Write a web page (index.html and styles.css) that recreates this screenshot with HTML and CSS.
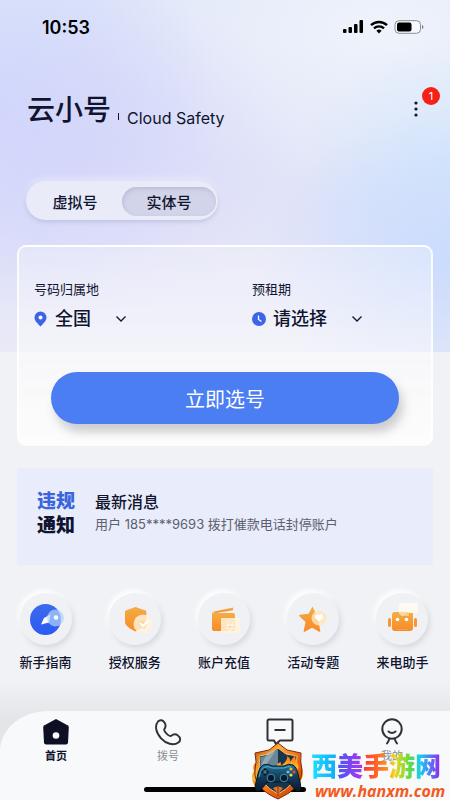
FILE: index.html
```html
<!DOCTYPE html>
<html lang="zh-CN">
<head>
    <meta charset="UTF-8">
    <meta name="viewport" content="width=device-width, initial-scale=1.0">
    <title>云小号</title>
    <link rel="stylesheet" href="styles.css">
</head>
<body>

    <div class="status-bar">
        <span class="time">10:53</span>
        <div class="status-icons">
            <svg width="22" height="14" viewBox="0 0 22 14">
                <rect x="1" y="9" width="3.500" height="4" rx="1"/>
                <rect x="6.500" y="7" width="3.500" height="6" rx="1"/>
                <rect x="12" y="4" width="3.500" height="9" rx="1"/>
                <rect x="17.500" y="0" width="3.500" height="13" rx="1"/>
            </svg>
            <svg width="18" height="14" viewBox="0 0 18 14" fill="none" stroke="#000" stroke-width="2.4">
                <path d="M1 5.200a11.600 11.600 0 0 1 16 0"/>
                <path d="M4 8.400a7.200 7.200 0 0 1 10 0"/>
                <path d="M9 13.400l-2.600-2.700a3.800 3.800 0 0 1 5.200 0z" fill="#000" stroke="none"/>
            </svg>
            <svg width="30" height="14" viewBox="0 0 30 14">
                <rect x="1" y=".7" width="25.500" height="12.600" rx="4" fill="#fff" fill-opacity=".5" stroke="#8b8d96"/>
                <rect x="3" y="2.500" width="14.500" height="9" rx="2"/>
                <path d="M28 5v4q1.400-.6 1.400-2T28 5z" fill="#777"/>
            </svg>
        </div>
    </div>

    <header class="header">
        <h1>云小号</h1>
        <span class="divider"></span>
        <span class="subtitle">Cloud Safety</span>
        <button class="more-btn" aria-label="更多">
            <svg width="6" height="18" viewBox="0 0 6 18" fill="#10142e">
                <circle cx="3" cy="3" r="1.600"/>
                <circle cx="3" cy="9" r="1.600"/>
                <circle cx="3" cy="15" r="1.600"/>
            </svg>
            <span class="badge">1</span>
        </button>
    </header>

    <div class="switch">
        <button class="switch-btn">虚拟号</button>
        <button class="switch-btn active">实体号</button>
    </div>

    <form class="card">
        <div class="fields">
            <div class="field">
                <label for="region">号码归属地</label>
                <div class="field-row">
                    <svg width="14" height="16" viewBox="0 0 14 16">
                        <path d="M6.500 .5a6 6 0 0 1 6 6c0 3.600-3.500 6.200-6 9-2.500-2.800-6-5.400-6-9a6 6 0 0 1 6-6z" fill="#3b64e6"/>
                        <circle cx="6.500" cy="6.500" r="2" fill="#fff"/>
                    </svg>
                    <div class="select-box">
                        <select id="region">
                            <option>全国</option>
                        </select>
                        <svg class="arrow" width="12" height="8" viewBox="0 0 12 8" fill="none" stroke="#10142e" stroke-width="1.300"><path d="M1.500 1.500L6 6l4.500-4.500"/></svg>
                    </div>
                </div>
            </div>
            <div class="field">
                <label for="period">预租期</label>
                <div class="field-row">
                    <svg width="14" height="16" viewBox="0 0 14 16">
                        <circle cx="7" cy="8" r="7" fill="#3b64e6"/>
                        <path d="M6.500 4.500v4l3 2" fill="none" stroke="#fff" stroke-width="1.300"/>
                    </svg>
                    <div class="select-box">
                        <select id="period">
                            <option>请选择</option>
                        </select>
                        <svg class="arrow" width="12" height="8" viewBox="0 0 12 8" fill="none" stroke="#10142e" stroke-width="1.300"><path d="M1.500 1.500L6 6l4.500-4.500"/></svg>
                    </div>
                </div>
            </div>
        </div>
        <button type="button" class="submit-btn">立即选号</button>
    </form>

    <section class="notice">
        <div class="notice-logo"><span class="blue">违规</span><span>通知</span></div>
        <div class="notice-text">
            <h2>最新消息</h2>
            <p>用户 185****9693 拨打催款电话封停账户</p>
        </div>
    </section>

    <!-- Shortcuts -->
    <div class="shortcuts">
        <a href="#guide">
            <span class="circle">
                <svg width="36" height="36" viewBox="0 0 36 36">
                    <defs>
                        <linearGradient id="orange" x1="0" y1="0" x2="0" y2="1"><stop offset="0" stop-color="#f3ad45"/><stop offset="1" stop-color="#f98a27"/></linearGradient>
                        <linearGradient id="blue" x1="0" y1="0" x2="0" y2="1"><stop offset="0" stop-color="#3c6bed"/><stop offset="1" stop-color="#2a5af3"/></linearGradient>
                    </defs>
                    <circle cx="17.500" cy="18.500" r="15.500" fill="url(#blue)"/>
                    <path d="M13 23.500l3-6.500 6.500-3.500-1.500 8z" fill="#fff"/>
                    <circle cx="27.500" cy="17" r="8.500" fill="#b4d4fb" fill-opacity=".7"/>
                    <circle cx="28" cy="16.500" r="2.300" fill="#fff"/>
                </svg>
            </span>
            新手指南
        </a>
        <a href="#service">
            <span class="circle">
                <svg width="36" height="36" viewBox="0 0 36 36">
                    <path d="M18.500 6l10 3.500c.5.200.8.600.8 1.100V21c0 4-6 7-10.800 9.500C13.700 28 8 25 8 21V10.600c0-.5.300-.9.800-1.100z" fill="url(#orange)"/>
                    <circle cx="26" cy="23" r="9.500" fill="#fff3dd" fill-opacity=".82"/>
                    <path d="M21 23l4-4 5 5-3 4z" fill="#f8c98a" fill-opacity=".5"/>
                    <path d="M23 22l3 3 5-5" fill="none" stroke="#fff" stroke-width="2"/>
                </svg>
            </span>
            授权服务
        </a>
        <a href="#recharge">
            <span class="circle">
                <svg width="36" height="36" viewBox="0 0 36 36">
                    <path d="M6 11L27 6.500v2.700L10 12z" fill="url(#orange)"/>
                    <path d="M6 12h21q2 0 2 2v14q0 2-2 2H8q-2 0-2-2z" fill="url(#orange)"/>
                    <rect x="15" y="17" width="19" height="15" rx="1" fill="#fff3dc" fill-opacity=".85"/>
                    <path d="M21 20l3 4 3-4M20.500 24.500h7M20.500 27h7M24 24v6" fill="none" stroke="#fff" stroke-width="1.700"/>
                    <path d="M21 19.500l3 4 3-4M21 26h6M24 24v5" fill="none" stroke="#f6c77c" stroke-width=".7"/>
                </svg>
            </span>
            账户充值
        </a>
        <a href="#events">
            <span class="circle">
                <svg width="36" height="36" viewBox="0 0 36 36">
                    <path d="M17.500 5.500l3.700 8 8.800 1-6.500 6 1.800 9.500q.1 1.200-1 .7l-7.300-4-7.300 4q-1.200.4-1-.8L10.500 21 4.200 15q-.6-1 .6-1.200l8.700-1z" fill="url(#orange)"/>
                    <circle cx="24" cy="17" r="7.500" fill="#ffe6bc" fill-opacity=".8"/>
                    <path d="M24 20.500l-4-3.800q-1-3 1.800-3.200h4.400q2.800.2 1.800 3.200z" fill="#fff"/>
                </svg>
            </span>
            活动专题
        </a>
        <a href="#assistant">
            <span class="circle">
                <svg width="36" height="36" viewBox="0 0 36 36">
                    <rect x="8" y="11" width="21" height="19" rx="3" fill="url(#orange)"/>
                    <rect x="4" y="17" width="3" height="9" rx="1.500" fill="#f99435"/>
                    <rect x="30" y="17" width="3" height="9" rx="1.500" fill="#f99435"/>
                    <circle cx="13.500" cy="18.500" r="1.800" fill="#fff"/>
                    <circle cx="22.500" cy="18.500" r="1.800" fill="#fff"/>
                    <path d="M13 28.500h11" stroke="#f0a252" stroke-width="1"/>
                    <path d="M15 2h19v10H22l-4 3-3-3z" fill="#fffaf0" fill-opacity=".88"/>
                    <path d="M15 11h10v4h-7z" fill="#fcd597" fill-opacity=".8"/>
                </svg>
            </span>
            来电助手
        </a>
    </div>

    <nav class="tab-bar">
        <div class="tabs">
            <a href="#home" class="tab active">
                <svg width="28" height="28" viewBox="0 0 28 28"><path d="M14 1l11.500 6.200q1.300.8 1.300 2.300L26 24.500q-.2 2-2 2H4q-1.800 0-2-2L1.200 9.500q0-1.500 1.300-2.300z" fill="#0d1024"/><circle cx="14" cy="17.500" r="3.300" fill="#f8f9fb"/></svg>
                首页
            </a>
            <a href="#dial" class="tab">
                <svg width="28" height="28" viewBox="0 0 28 28" fill="none" stroke="#303138" stroke-width="1.900" stroke-linejoin="round"><path d="M4 3.500C6 1.300 9 2 10.800 5c1.700 2.900.7 4.500-.5 6.300-1 1.600 4.800 7.600 6.600 6.600 2.100-1.500 4.200-2.500 6.700-.7 3.200 2.300 3.300 5.500.8 7.300-5 3.500-12.400 1.300-17.300-4.200C1.500 14.500.7 7.300 4 3.500z"/></svg>
                拨号
            </a>
            <a href="#message" class="tab">
                <svg width="28" height="28" viewBox="0 0 28 28" fill="none" stroke="#303138" stroke-width="2" stroke-linejoin="round"><path d="M3 1.500h22q1.500 0 1.500 1.500v18q0 1.500-1.500 1.500H14l-4 3.500-2-3.500H3Q1.500 22.500 1.500 21V3Q1.500 1.500 3 1.500z"/><path d="M8.500 12h11"/></svg>
                消息
            </a>
            <a href="#mine" class="tab">
                <svg width="28" height="28" viewBox="0 0 28 28" fill="none" stroke="#303138" stroke-width="2" stroke-linecap="round"><circle cx="14" cy="11" r="9.700"/><path d="M10.500 13.500q3.500 3 7 0"/><path d="M11.500 20.500q-1 3-2.500 5M16.500 20.500q1 3 2.500 5"/></svg>
                我的
            </a>
        </div>
        <div class="home-line"></div>

        <div class="site-mark">
            <svg width="54" height="58" viewBox="0 0 54 58">
                <defs>
                    <linearGradient id="rim" x1="0" y1="0" x2="1" y2="1"><stop offset="0" stop-color="#b83c08"/><stop offset=".3" stop-color="#ffae35"/><stop offset=".6" stop-color="#ec640e"/><stop offset="1" stop-color="#c73f08"/></linearGradient>
                    <linearGradient id="fire" x1="0" y1="0" x2="0" y2="1"><stop offset="0" stop-color="#ff6a0c"/><stop offset=".6" stop-color="#ffb52d"/><stop offset="1" stop-color="#f15b08"/></linearGradient>
                    <linearGradient id="pad" x1="0" y1="0" x2="0" y2="1"><stop offset="0" stop-color="#28739a"/><stop offset=".5" stop-color="#123a58"/><stop offset="1" stop-color="#09192d"/></linearGradient>
                </defs>
                <path d="M4 21q-3 3-1 8-4 5 0 14l3 6 8-4-6-20zM50 18q0 4-1 5 6 8 1 15l-4 9-8-5 5-17z" fill="url(#fire)"/>
                <path d="M27 1l9 7 14 3q-1 9 1 17 1 18-24 29Q2 46 4 28q2-8 0-17l14-3z" fill="url(#rim)" stroke="#7c2a0b"/>
                <path d="M27 6l8 6 11 2q-1 6 0 14 0 14-19 24Q8 42 8 28q1-8 0-14l11-2z" fill="#17364d" stroke="#ffc063"/>
                <path d="M27 7L19 13 9 15q1 7 0 14l18-1z" fill="#6a8797"/>
                <path d="M17 10l8-2-13 20-3-3z" fill="#b0c0c4" fill-opacity=".6"/>
                <path d="M25 26q1-5 5-6-1 3 1 3 6-5 5-9 4 2 3 6l5-7q0 5 3 9 2 5-2 10H24z" fill="url(#fire)"/>
                <path d="M31 27l4-3 1 2 5-5 1 7z" fill="#ffdf55"/>
                <path d="M12 23q5-2 9 1h12q5-3 9-1 4 2 6 13 4 13-1 13-3 0-9-9H16q-6 9-9 9-5 0-1-13 2-11 6-13z" fill="url(#pad)" stroke="#081624"/>
                <path d="M8 35q2-9 6-10 4-1 7 1h12q4-2 7-1" fill="none" stroke="#4ab3d8"/>
                <path d="M14 26.500v7M10.500 30h7" stroke="#071320" stroke-width="2.500"/>
                <path d="M14 28v4M12 30h4" stroke="#82aabd" stroke-width=".8"/>
                <circle cx="20" cy="36" r="3.800" fill="#0a1929" stroke="#438eac"/>
                <circle cx="33" cy="36" r="3.800" fill="#0a1929" stroke="#438eac"/>
                <circle cx="40" cy="27" r="1.600" fill="#ffb52b"/>
                <circle cx="37" cy="30" r="1.600" fill="#49cbf2"/>
                <circle cx="43" cy="30" r="1.600" fill="#f44b27"/>
                <circle cx="40" cy="33" r="1.600" fill="#f4df48"/>
                <path d="M22 46q5-3 10 0l-5 6z" fill="#e4702a"/>
                <path d="M27 44v10" stroke="#7d381c"/>
            </svg>
            <div class="site-text">
                <strong>西美手游网</strong>
                <em>www.hanxm.com</em>
            </div>
        </div>
    </nav>

</body>
</html>
```
FILE: styles.css
```css
* {
    box-sizing: border-box;
}

body {
    margin: 0;
    min-height: 100vh;
    display: flex;
    flex-direction: column;
    font-family: Inter, "Noto Sans CJK SC", sans-serif;
    color: #10142e;
    /* hero glow on top, plain grey below */
    background:
        radial-gradient(ellipse 190px 150px at 100% 260px, rgba(196, 217, 254, 0.8), transparent) no-repeat 0 0 / 100% 352px,
        radial-gradient(ellipse 150px 120px at 100% 160px, rgba(208, 231, 253, 0.7), transparent) no-repeat 0 0 / 100% 352px,
        radial-gradient(ellipse 230px 170px at 70px 150px, rgba(212, 211, 250, 0.7), transparent) no-repeat 0 0 / 100% 352px,
        radial-gradient(ellipse 220px 200px at 0 110px, rgba(202, 214, 252, 0.8), transparent) no-repeat 0 0 / 100% 352px,
        radial-gradient(ellipse 300px 160px at 85% 30px, #eff3fb, transparent) no-repeat 0 0 / 100% 352px,
        linear-gradient(#e0e6f9, #e2e4f8 60%, #e9e9f7) no-repeat 0 0 / 100% 352px,
        linear-gradient(#f1f2f5 0, #f1f2f5 680px, #e4e5e9 720px);
}

button,
select {
    font-family: inherit;
    color: inherit;
    border: none;
    padding: 0;
    cursor: pointer;
}

a {
    color: inherit;
    text-decoration: none;
}

.status-bar {
    display: flex;
    justify-content: space-between;
    align-items: center;
    height: 54px;
    padding: 0 26px 0 42px;
}

.time {
    font-size: 18px;
    font-weight: 600;
    color: #000;
}

.status-icons {
    display: flex;
    gap: 6px;
}

.header {
    display: flex;
    align-items: flex-end;
    padding: 0 31px 51px 27px;
    height: 127px;
}

.header h1 {
    margin: 0;
    font-size: 28px;
    line-height: 40px;
    font-weight: 500;
}

.divider {
    width: 1px;
    height: 7px;
    margin: 0 8px 10px 7px;
    background: #10142e;
}

.subtitle {
    font-size: 16px;
    line-height: 24px;
}

.more-btn {
    position: relative;
    display: flex;
    margin-left: auto;
    margin-bottom: 12px;
    background: none;
}

.badge {
    position: absolute;
    left: 9px;
    top: -13px;
    width: 18px;
    height: 18px;
    border-radius: 50%;
    background: #f62017;
    color: #fff;
    font-size: 11px;
    line-height: 18px;
}

.switch {
    align-self: flex-start;
    display: flex;
    margin-left: 26px;
    padding: 6px 2px 4px;
    border-radius: 20px;
    background: #e9ebf9;
    box-shadow: 0 2px 4px rgba(140, 145, 185, 0.35), 0 -3px 6px rgba(240, 240, 255, 0.6);
}

.switch-btn {
    width: 94px;
    height: 29px;
    border-radius: 15px;
    background: none;
    font-size: 15px;
    font-weight: 500;
}

.switch-btn.active {
    background: #d2d5e9;
    box-shadow: inset 1px 2px 4px rgba(150, 154, 190, 0.4);
}

.card {
    margin: 25px 17px 0;
    padding: 32px 32px 20px;
    border: 2px solid rgba(255, 255, 255, 0.8);
    border-radius: 9px;
    background: linear-gradient(rgba(250, 250, 253, 0.3), rgba(252, 252, 253, 0.5) 50%, rgba(253, 253, 253, 0.9));
}

.fields {
    display: grid;
    grid-template-columns: 1fr 164px;
    margin: 0 -17px;
}

.field label {
    display: block;
    font-size: 13px;
    line-height: 20px;
}

.field-row {
    display: flex;
    align-items: center;
    gap: 7px;
    margin-top: 6px;
}

.select-box {
    display: grid;
    align-items: center;
}

.select-box select {
    grid-area: 1 / 1;
    appearance: none;
    padding-right: 36px;
    background: none;
    font-size: 18px;
    font-weight: 500;
    line-height: 28px;
}

.arrow {
    grid-area: 1 / 1;
    justify-self: end;
    pointer-events: none;
}

.submit-btn {
    width: 100%;
    height: 52px;
    margin-top: 39px;
    border-radius: 26px;
    background: #4b7df3;
    box-shadow: 4px 8px 10px rgba(120, 120, 125, 0.35);
    color: #fff;
    font-size: 20px;
}

.notice {
    display: flex;
    gap: 20px;
    margin: 22px 17px 0;
    padding: 22px 20px;
    height: 97px;
    background: #e9ecfa;
}

.notice-logo {
    display: flex;
    flex-direction: column;
    font-size: 19px;
    font-weight: 900;
    line-height: 24px;
}

.notice-logo .blue {
    color: #3b64e0;
}

.notice-text h2 {
    margin: 0;
    font-size: 16px;
    font-weight: 500;
    line-height: 24px;
}

.notice-text p {
    margin: 0;
    font-size: 13px;
    line-height: 20px;
    color: #5c5f70;
}

.shortcuts {
    display: grid;
    grid-template-columns: repeat(5, 1fr);
    margin: 28px 3px 20px 1px;
}

.shortcuts a {
    display: flex;
    flex-direction: column;
    align-items: center;
    gap: 7px;
    font-size: 13px;
    font-weight: 500;
    line-height: 20px;
}

.circle {
    display: flex;
    justify-content: center;
    align-items: center;
    width: 52px;
    height: 52px;
    border-radius: 50%;
    background: #f0f1f4;
    box-shadow: 2px 3px 5px rgba(180, 183, 195, 0.4), -2px -3px 5px #fff;
}

.tab-bar {
    position: relative;
    margin-top: auto;
    padding: 7px 0 8px;
    border-top-left-radius: 48px 40px;
    background: #f8f9fb;
}

.tabs {
    display: grid;
    grid-template-columns: repeat(4, 1fr);
    margin-right: 2px;
}

.tab {
    display: flex;
    flex-direction: column;
    align-items: center;
    gap: 2px;
    font-size: 11px;
    line-height: 16px;
    color: #8c8d94;
}

.tab.active {
    color: #10142e;
    font-weight: 700;
}

.home-line {
    width: 36%;
    height: 5px;
    margin: 23px auto 0;
    border-radius: 3px;
    background: #000;
}

/* Site logo, lies over the tab bar */
.site-mark {
    position: absolute;
    left: 251px;
    bottom: 0;
    display: flex;
    align-items: flex-end;
    gap: 6px;
}

.site-text {
    display: flex;
    flex-direction: column;
    align-items: flex-start;
}

.site-text strong {
    font-size: 26px;
    font-weight: 900;
    line-height: 30px;
    background: linear-gradient(90deg, #1fe0ff, #10b0fa 18%, #4f55f5 22%, #a238ee 38%, #ff3d31 42%, #ff8b22 58%, #f5d51e 64%, #5fdc3f 76%, #14cdf8 84%, #8a35ed 98%);
    background-clip: text;
    color: transparent;
}

.site-text em {
    padding-left: 4px;
    font-family: "Open Sans", "Noto Sans", sans-serif;
    font-size: 16px;
    font-weight: 700;
    line-height: 18px;
    color: #f4591d;
}
```
